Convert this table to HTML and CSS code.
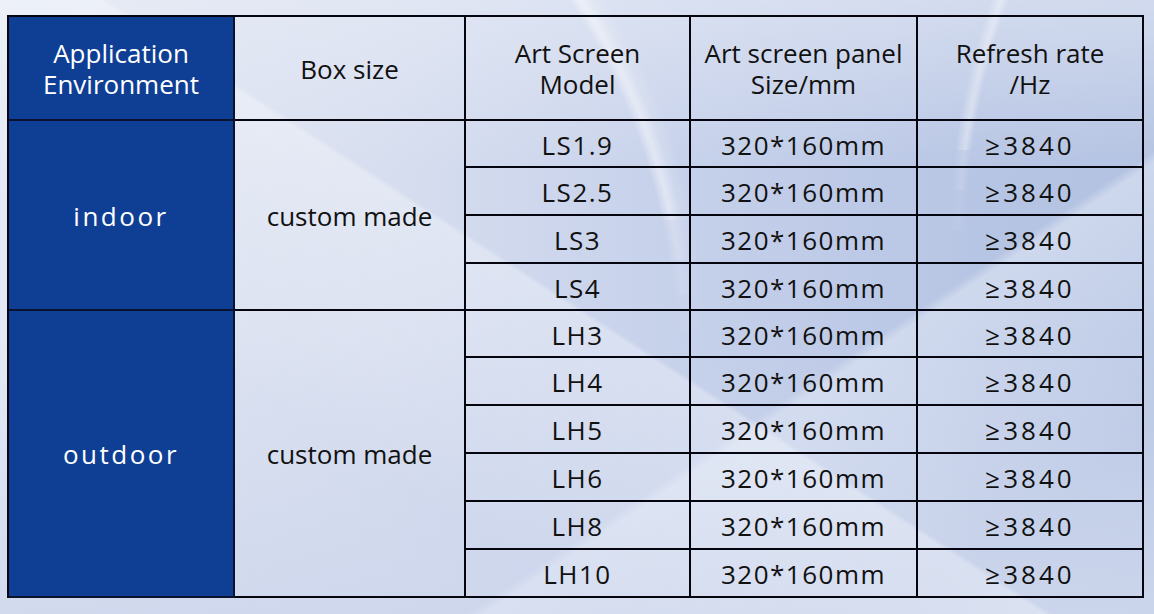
FILE: index.html
```html
<!DOCTYPE html>
<html lang="en">
<head>
<meta charset="utf-8">
<title>Art Screen specifications</title>
<link rel="stylesheet" href="styles.css">
</head>
<body>
<div class="spec">
  <div class="cell head blue">Application<br>Environment</div>
  <div class="cell head">Box size</div>
  <div class="cell head">Art Screen<br>Model</div>
  <div class="cell head">Art screen panel<br>Size/mm</div>
  <div class="cell head">Refresh rate<br>/Hz</div>

  <div class="cell blue env span4">indoor</div>
  <div class="cell box span4">custom made</div>
  <div class="cell num">LS1.9</div><div class="cell num">320*160mm</div><div class="cell num hz">≥3840</div>
  <div class="cell num">LS2.5</div><div class="cell num">320*160mm</div><div class="cell num hz">≥3840</div>
  <div class="cell num">LS3</div><div class="cell num">320*160mm</div><div class="cell num hz">≥3840</div>
  <div class="cell num">LS4</div><div class="cell num">320*160mm</div><div class="cell num hz">≥3840</div>

  <div class="cell blue env span6">outdoor</div>
  <div class="cell box span6">custom made</div>
  <div class="cell num">LH3</div><div class="cell num">320*160mm</div><div class="cell num hz">≥3840</div>
  <div class="cell num">LH4</div><div class="cell num">320*160mm</div><div class="cell num hz">≥3840</div>
  <div class="cell num">LH5</div><div class="cell num">320*160mm</div><div class="cell num hz">≥3840</div>
  <div class="cell num">LH6</div><div class="cell num">320*160mm</div><div class="cell num hz">≥3840</div>
  <div class="cell num">LH8</div><div class="cell num">320*160mm</div><div class="cell num hz">≥3840</div>
  <div class="cell num">LH10</div><div class="cell num">320*160mm</div><div class="cell num hz">≥3840</div>
</div>
</body>
</html>
```

FILE: styles.css
```css
html, body {
  margin: 0;
  height: 100%;
}

body {
  width: 1154px;
  height: 614px;
  overflow: hidden;
  box-sizing: border-box;
  padding: 15px 0 0 7px;
  font-family: "Open Sans", "Noto Sans", "DejaVu Sans", sans-serif;
  color: #111;
  background-image:
    radial-gradient(circle at 49px 350px, transparent 626px, rgba(255,255,255,0.28) 636px, rgba(255,255,255,0.07) 646px, transparent 660px),
    radial-gradient(circle at 49px 350px, transparent 626px, rgba(255,255,255,0.14) 636px, rgba(255,255,255,0.04) 646px, transparent 660px),
    radial-gradient(circle at 49px 350px, transparent 626px, rgba(255,255,255,0.08) 636px, rgba(255,255,255,0.02) 646px, transparent 660px),
    radial-gradient(circle at 49px 350px, transparent 626px, rgba(255,255,255,0.05) 636px, transparent 660px),
    radial-gradient(circle at 1700px 250px, transparent 735px, rgba(255,255,255,0.25) 742px, transparent 752px),
    radial-gradient(circle at 1700px 250px, transparent 735px, rgba(255,255,255,0.1) 742px, transparent 752px),
    radial-gradient(circle at 1700px 250px, transparent 735px, rgba(255,255,255,0.06) 742px, transparent 752px),
    linear-gradient(213deg, transparent 570px, rgba(255,255,255,0.3) 575px, rgba(255,255,255,0) 820px),
    linear-gradient(146deg, transparent 770px, rgba(225,232,245,0.55) 780px, rgba(215,223,240,0.2) 1000px),
    linear-gradient(to bottom, rgba(234,238,247,0.55) 0%, rgba(234,238,247,0) 28%, rgba(205,214,236,0) 55%, rgba(205,214,236,0.8) 100%),
    linear-gradient(to right, #e3e8f4 0%, #d7deef 33%, #c5d0ea 60%, #b7c5e4 85%, #b3c2e2 100%);
  background-size:
    1154px 220px,
    1154px 260px,
    1154px 295px,
    1154px 330px,
    1154px 150px,
    1154px 190px,
    1154px 230px,
    1154px 614px,
    1154px 614px,
    1154px 614px,
    1154px 614px;
  background-repeat: no-repeat;
}

.spec {
  display: grid;
  grid-template-columns: 226px 231px 225px 227px 226px;
  grid-template-rows: 104px 47px 48px 48px 47px 47px 48px 48px 48px 48px 48px;
  width: 1137px;
  box-sizing: border-box;
  border-top: 2px solid #050510;
  border-left: 2px solid #050510;
}

.cell {
  box-sizing: border-box;
  border-right: 2px solid #050510;
  border-bottom: 2px solid #050510;
  display: flex;
  align-items: center;
  justify-content: center;
  text-align: center;
  font-size: 26px;
  line-height: 31px;
}

.head {
  padding-top: 2px;
}

.blue {
  background: #0f3f95;
  color: #fff;
  border-color: #0a1230;
}

.env {
  letter-spacing: 2.5px;
  padding-top: 2px;
}

.box {
  padding-top: 2px;
}

.num {
  letter-spacing: 1.5px;
  padding-top: 3px;
}

.hz {
  letter-spacing: 3px;
}

.span4 {
  grid-row: span 4;
}

.span6 {
  grid-row: span 6;
}
```
